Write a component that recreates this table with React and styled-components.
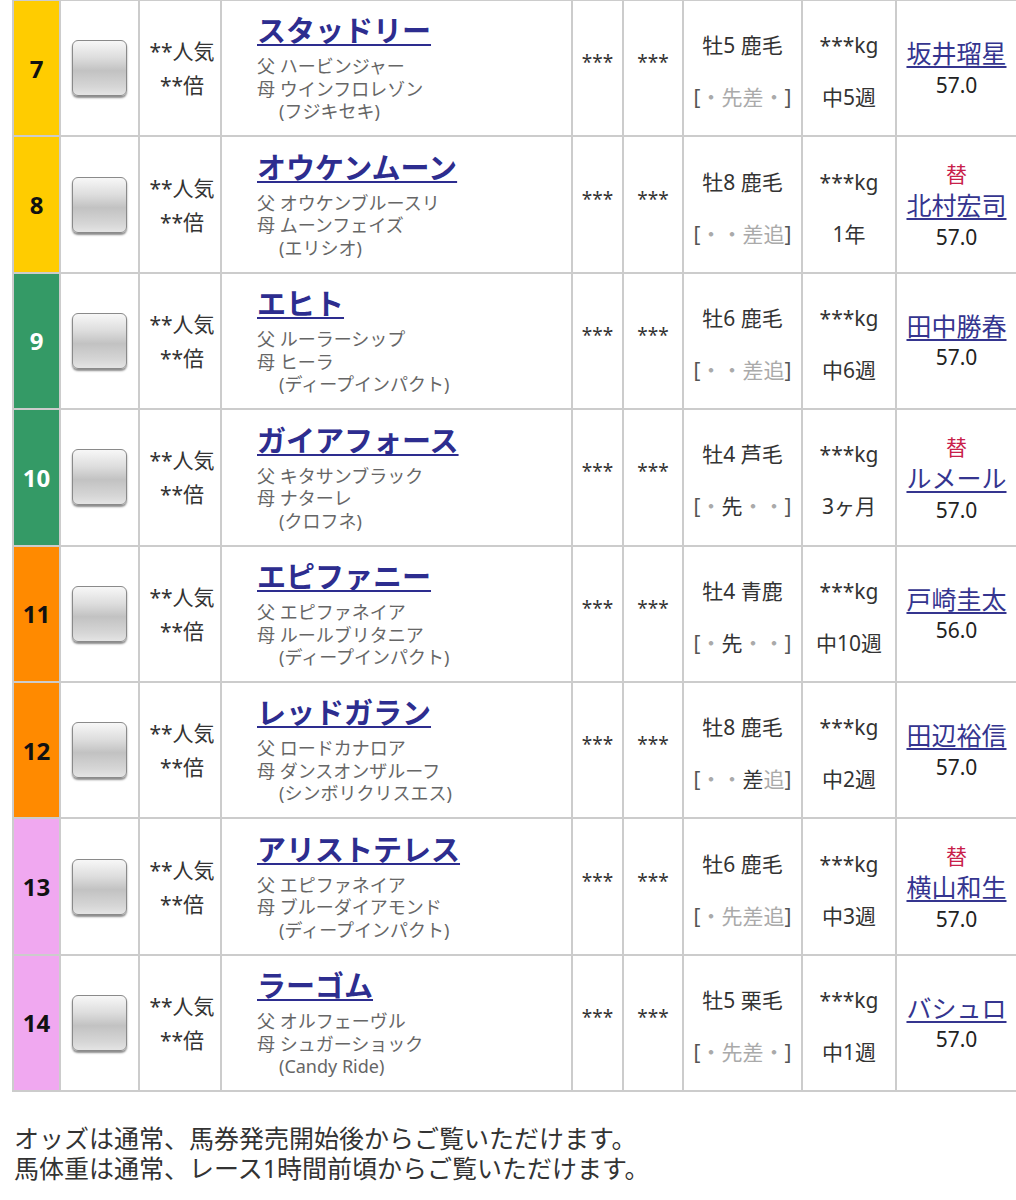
import React from 'react';
import styled, { createGlobalStyle } from 'styled-components';

const GlobalStyle = createGlobalStyle`
  body {
    margin: 0;
    background: #fff;
    font-family: "Noto Sans", "Noto Sans CJK JP", sans-serif;
    color: #333;
  }
`;

const Page = styled.div`
  padding-left: 12px;
  width: 1004px;
`;

const Table = styled.table`
  border-collapse: collapse;
  table-layout: fixed;
  width: 1004px;
  margin-top: -1px;
`;

const Row = styled.tr`
  height: 136.4px;
`;

const Cell = styled.td`
  border: 2px solid #ccc;
  padding: 0;
  vertical-align: middle;
  text-align: center;
`;

const NumCell = styled(Cell)`
  background: ${p => p.$bg};
  color: ${p => p.$fg};
  font-weight: 700;
  font-size: 24px;
`;

const CheckBox = styled.div`
  width: 55px;
  height: 56px;
  margin: 0 auto;
  box-sizing: border-box;
  border: 1px solid #8a8a8a;
  border-radius: 6px;
  background: linear-gradient(#f7f7f7 0%, #dedede 30%, #c2c2c2 55%, #d6d6d6 85%, #e4e4e4 100%);
  box-shadow: 0 2px 2px rgba(0, 0, 0, 0.45);
`;

const Pop = styled.div`
  font-size: 21px;
  line-height: 34px;
  color: #333;
  padding-left: 4px;
`;

const NameCell = styled(Cell)`
  text-align: left;
  padding-left: 35px;
`;

const HorseName = styled.a`
  display: inline-block;
  font-size: 29px;
  font-weight: 700;
  line-height: 36px;
  color: #2d2d8f;
  text-decoration: underline;
  text-decoration-thickness: 2px;
  text-underline-offset: 2px;
  margin-bottom: 6px;
`;

const Pedigree = styled.div`
  font-size: 18px;
  line-height: 22.5px;
  color: #666;
  padding-left: ${p => (p.$indent ? '22px' : '0')};
`;

const Stars = styled.div`
  font-size: 19px;
  color: #333;
  padding-bottom: 12px;
`;

const Stack = styled.div`
  display: flex;
  flex-direction: column;
  align-items: center;
  gap: 26px;
  padding-top: 6px;
  font-size: 21px;
  line-height: 26px;
  color: #333;
`;

const Bracket = styled.span`
  color: #555;
`;

const Mark = styled.span`
  color: ${p => (p.$on ? '#333' : '#aaa')};
`;

const Jockey = styled.div`
  display: flex;
  flex-direction: column;
  align-items: center;
  line-height: 31.5px;
  padding-top: 3px;
`;

const Change = styled.div`
  color: #c8204a;
  font-size: 21px;
`;

const JockeyName = styled.a`
  color: #35358f;
  font-size: 25px;
  text-decoration: underline;
  text-underline-offset: 3px;
`;

const Weight = styled.div`
  font-size: 21px;
  color: #222;
`;

const Notes = styled.div`
  margin-top: 31px;
  padding-left: 2px;
  font-size: 25px;
  line-height: 30px;
  color: #333;
`;

const frame = {
  yellow: ['#ffcc00', '#111'],
  green: ['#349a66', '#fff'],
  orange: ['#ff8a00', '#111'],
  pink: ['#f0a8f0', '#111'],
};

const horses = [
  { no: 7, f: 'yellow', name: 'スタッドリー', sire: 'ハービンジャー', dam: 'ウインフロレゾン', bms: '(フジキセキ)', sex: '牡5 鹿毛', style: ['・', '先', '差', '・'], on: [], kg: '中5週', jockey: '坂井瑠星', w: '57.0' },
  { no: 8, f: 'yellow', name: 'オウケンムーン', sire: 'オウケンブルースリ', dam: 'ムーンフェイズ', bms: '(エリシオ)', sex: '牡8 鹿毛', style: ['・', '・', '差', '追'], on: [], kg: '1年', jockey: '北村宏司', w: '57.0', change: true },
  { no: 9, f: 'green', name: 'エヒト', sire: 'ルーラーシップ', dam: 'ヒーラ', bms: '(ディープインパクト)', sex: '牡6 鹿毛', style: ['・', '・', '差', '追'], on: [], kg: '中6週', jockey: '田中勝春', w: '57.0' },
  { no: 10, f: 'green', name: 'ガイアフォース', sire: 'キタサンブラック', dam: 'ナターレ', bms: '(クロフネ)', sex: '牡4 芦毛', style: ['・', '先', '・', '・'], on: [1], kg: '3ヶ月', jockey: 'ルメール', w: '57.0', change: true },
  { no: 11, f: 'orange', name: 'エピファニー', sire: 'エピファネイア', dam: 'ルールブリタニア', bms: '(ディープインパクト)', sex: '牡4 青鹿', style: ['・', '先', '・', '・'], on: [1], kg: '中10週', jockey: '戸崎圭太', w: '56.0' },
  { no: 12, f: 'orange', name: 'レッドガラン', sire: 'ロードカナロア', dam: 'ダンスオンザルーフ', bms: '(シンボリクリスエス)', sex: '牡8 鹿毛', style: ['・', '・', '差', '追'], on: [2], kg: '中2週', jockey: '田辺裕信', w: '57.0' },
  { no: 13, f: 'pink', name: 'アリストテレス', sire: 'エピファネイア', dam: 'ブルーダイアモンド', bms: '(ディープインパクト)', sex: '牡6 鹿毛', style: ['・', '先', '差', '追'], on: [], kg: '中3週', jockey: '横山和生', w: '57.0', change: true },
  { no: 14, f: 'pink', name: 'ラーゴム', sire: 'オルフェーヴル', dam: 'シュガーショック', bms: '(Candy Ride)', sex: '牡5 栗毛', style: ['・', '先', '差', '・'], on: [], kg: '中1週', jockey: 'バシュロ', w: '57.0' },
];

function HorseRow({ h }) {
  const [bg, fg] = frame[h.f];
  return (
    <Row>
      <NumCell $bg={bg} $fg={fg}>{h.no}</NumCell>
      <Cell><CheckBox /></Cell>
      <Cell>
        <Pop>**人気<br />**倍</Pop>
      </Cell>
      <NameCell>
        <HorseName href="#">{h.name}</HorseName>
        <Pedigree>父 {h.sire}</Pedigree>
        <Pedigree>母 {h.dam}</Pedigree>
        <Pedigree $indent>{h.bms}</Pedigree>
      </NameCell>
      <Cell><Stars>***</Stars></Cell>
      <Cell><Stars>***</Stars></Cell>
      <Cell>
        <Stack>
          <div>{h.sex}</div>
          <div>
            <Bracket>[</Bracket>
            {h.style.map((s, i) => (
              <Mark key={i} $on={h.on.includes(i)}>{s}</Mark>
            ))}
            <Bracket>]</Bracket>
          </div>
        </Stack>
      </Cell>
      <Cell>
        <Stack>
          <div>***kg</div>
          <div>{h.kg}</div>
        </Stack>
      </Cell>
      <Cell>
        <Jockey>
          {h.change && <Change>替</Change>}
          <JockeyName href="#">{h.jockey}</JockeyName>
          <Weight>{h.w}</Weight>
        </Jockey>
      </Cell>
    </Row>
  );
}

export default function App() {
  return (
    <Page>
      <GlobalStyle />
      <Table>
        <colgroup>
          <col style={{ width: 47 }} />
          <col style={{ width: 79 }} />
          <col style={{ width: 82 }} />
          <col style={{ width: 351 }} />
          <col style={{ width: 51 }} />
          <col style={{ width: 60 }} />
          <col style={{ width: 119 }} />
          <col style={{ width: 94 }} />
          <col style={{ width: 121 }} />
        </colgroup>
        <tbody>
          {horses.map(h => <HorseRow key={h.no} h={h} />)}
        </tbody>
      </Table>
      <Notes>
        オッズは通常、馬券発売開始後からご覧いただけます。<br />
        馬体重は通常、レース1時間前頃からご覧いただけます。
      </Notes>
    </Page>
  );
}
